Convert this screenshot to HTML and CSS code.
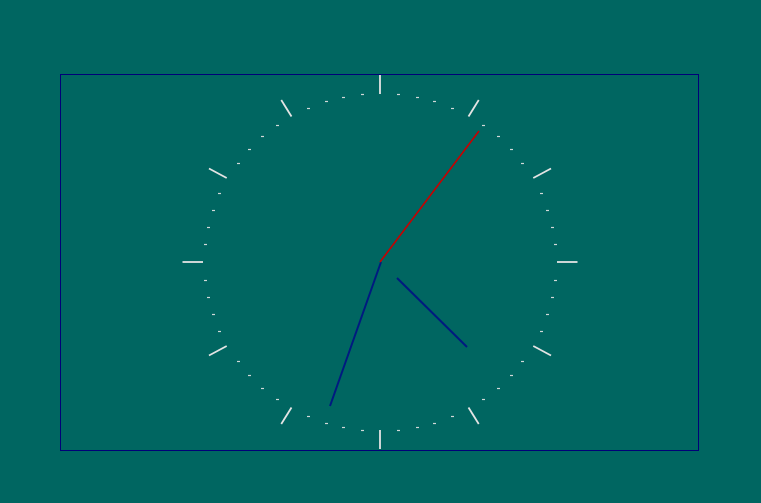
FILE: index.html
```html
<!DOCTYPE html>
<html>
<head>
<meta charset="utf-8">
<link rel="stylesheet" href="styles.css">
</head>
<body>
<div class="frame">
  <svg class="clock" width="637" height="375" viewBox="61 75 637 375">
    <g id="ticks"></g>
    <line class="hand hour" x1="397" y1="278" x2="467" y2="347"/>
    <line class="hand minute" x1="381" y1="262" x2="330" y2="406"/>
    <line class="hand second" x1="380" y1="262" x2="479" y2="131"/>
  </svg>
</div>
<script src="script.js"></script>
</body>
</html>
```
FILE: styles.css
```css
html, body {
  margin: 0;
  padding: 0;
  background: #006661;
}
body {
  width: 761px;
  height: 503px;
  overflow: hidden;
  padding-top: 74px;
  padding-left: 60px;
  box-sizing: border-box;
}
.frame {
  width: 637px;
  height: 375px;
  border: 1px solid #000078;
}
.clock {
  display: block;
  overflow: visible;
}
.hand {
  stroke-linecap: butt;
}
.hour, .minute {
  stroke: #001a80;
  stroke-width: 2;
}
.second {
  stroke: #c80000;
  stroke-width: 1.6;
}
.tick {
  stroke: #e4e4e4;
  stroke-width: 1.8;
}
.dot {
  stroke: #d0d8d8;
  stroke-width: 1.2;
}
```
FILE: script.js
```js
(function () {
  var g = document.getElementById('ticks');
  var ns = 'http://www.w3.org/2000/svg';
  var cx = 380, cy = 262;
  for (var i = 0; i < 60; i++) {
    var a = i * Math.PI / 30;
    var s = Math.sin(a), c = -Math.cos(a);
    var l = document.createElementNS(ns, 'line');
    if (i % 5 === 0) {
      l.setAttribute('x1', cx + 177 * s);
      l.setAttribute('y1', cy + 168 * c);
      l.setAttribute('x2', cx + 197.5 * s);
      l.setAttribute('y2', cy + 187 * c);
      l.setAttribute('class', 'tick');
    } else {
      var x = Math.round(cx + 176 * s), y = Math.round(cy + 169 * c) + 0.5;
      l.setAttribute('x1', x - 1);
      l.setAttribute('y1', y);
      l.setAttribute('x2', x + 2);
      l.setAttribute('y2', y);
      l.setAttribute('class', 'dot');
    }
    g.appendChild(l);
  }
})();
```
